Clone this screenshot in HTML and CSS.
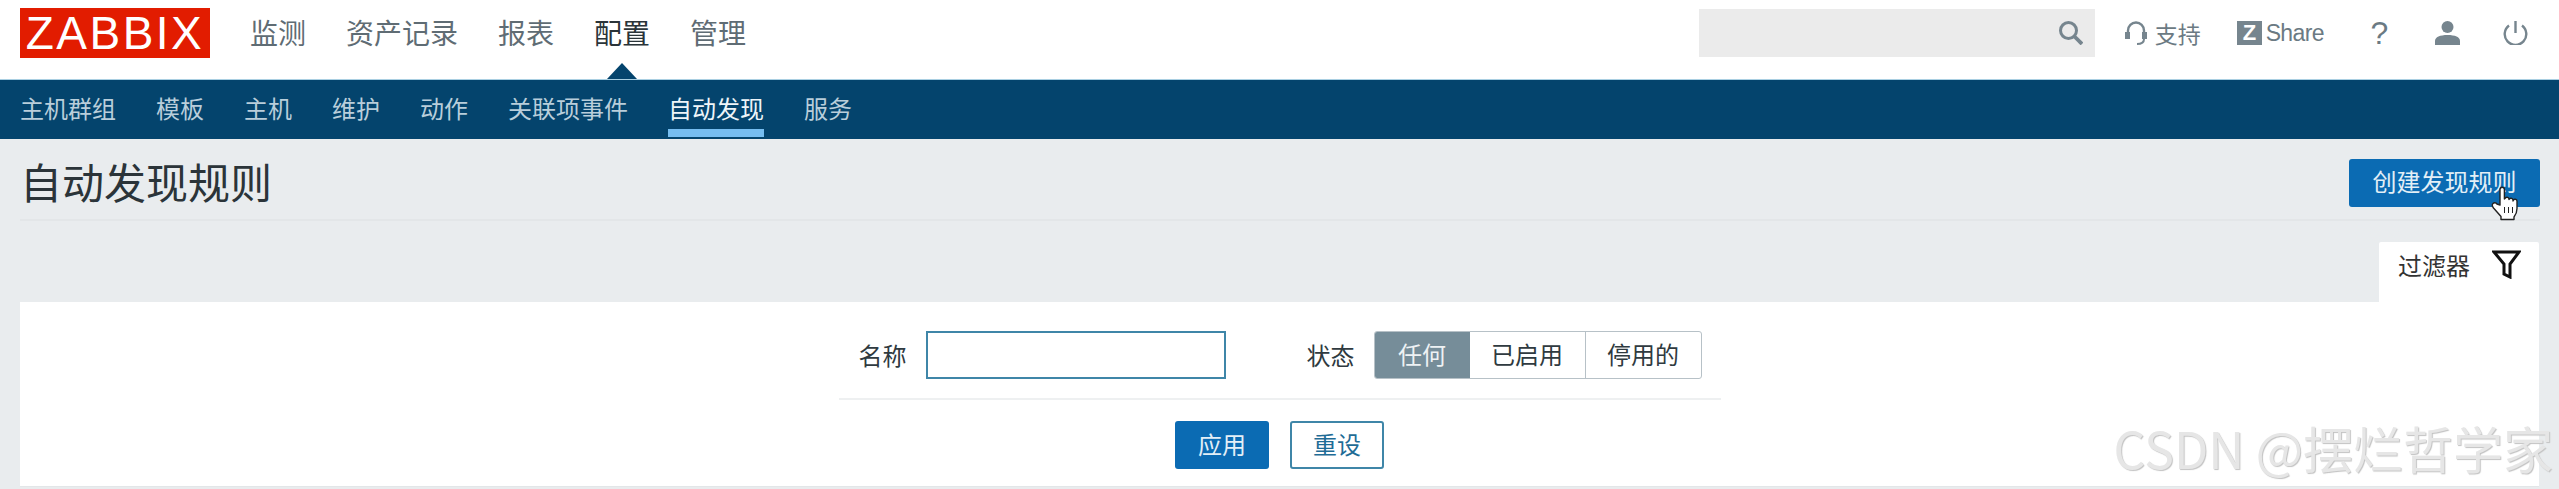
FILE: index.html
```html
<!DOCTYPE html>
<html lang="zh-CN">
<head>
  <meta charset="UTF-8" />
  <title>自动发现规则</title>
  <link rel="stylesheet" href="styles.css">
</head>
<body>

  <header class="top-bar">
    <a class="logo">ZABBIX</a>
    <nav class="main-nav">
      <a>监测</a>
      <a>资产记录</a>
      <a>报表</a>
      <a class="active">配置</a>
      <a>管理</a>
    </nav>
    <div class="top-tools">
      <div class="search">
        <svg class="search-icon" viewBox="0 0 24 24" width="24" height="24" fill="none" stroke="#76858e" stroke-width="3">
          <circle cx="9.5" cy="9.5" r="8"/>
          <path d="M15 15l8 8" stroke-width="3.8"/>
        </svg>
      </div>
      <a class="tool support">
        <svg viewBox="0 0 22 24" width="22" height="24" fill="none" stroke="#76858e" stroke-width="2.4">
          <path d="M3 15V9.500a8 8 0 0 1 16 0V15"/>
          <path d="M2.500 11v7M19.500 11v7" stroke-width="5"/>
          <path d="M19 18c0 3-2 5-7 5" stroke-width="2"/>
        </svg>
        <span>支持</span>
      </a>
      <a class="tool share"><i class="z-box">Z</i><span>Share</span></a>
      <a class="tool help">?</a>
      <a class="tool user">
        <svg viewBox="0 0 25 24" width="25" height="24" fill="#76858e">
          <circle cx="12.5" cy="6" r="6"/>
          <path d="M0 24v-4c0-4 5-6 12.500-6s12.500 2 12.500 6v4z"/>
        </svg>
      </a>
      <a class="tool power">
        <svg viewBox="0 0 25 24" width="25" height="24" fill="none" stroke="#76858e" stroke-width="2.4">
          <path d="M12.500 0v12"/>
          <path d="M6 4.500a10.800 10.800 0 1 0 13 0"/>
        </svg>
      </a>
    </div>
  </header>

  <nav class="sub-nav">
    <a>主机群组</a>
    <a>模板</a>
    <a>主机</a>
    <a>维护</a>
    <a>动作</a>
    <a>关联项事件</a>
    <a class="active">自动发现</a>
    <a>服务</a>
  </nav>

  <main>
    <div class="title-row">
      <h1>自动发现规则</h1>
      <button class="create-btn">创建发现规则
        <svg class="hand" viewBox="0 0 28 35" width="28" height="35" fill="#fff" stroke="#222" stroke-width="1.4" stroke-linejoin="round">
          <path d="M9 19V3.500a2.200 2.200 0 0 1 4.400 0V13l.6-.5a2.100 2.100 0 0 1 4 .5v.5a2.100 2.100 0 0 1 4 .5v1a2 2 0 0 1 4 .5v7c0 4-1 6-3 8.500v2.500H10v-3L2.500 22c-1.500-2-1.500-3.500-.5-4.500s3-1 4 .5z"/>
          <path d="M13.500 21v6M17.500 21v6M21.500 21v6" fill="none" stroke-width="1"/>
        </svg>
      </button>
    </div>

    <div class="filter-tab">
      <span>过滤器</span>
      <svg viewBox="0 0 29 29" width="29" height="29" fill="none" stroke="#111" stroke-width="3" stroke-linejoin="miter">
        <path d="M2 2h25L18 14v13l-6-3V14z"/>
      </svg>
    </div>

    <section class="filter-panel">
      <div class="filter-fields">
        <label class="field-label">名称</label>
        <input class="name-input" type="text" />
        <label class="field-label status-label">状态</label>
        <div class="segments">
          <span class="segment on">任何</span>
          <span class="segment wide">已启用</span>
          <span class="segment wide">停用的</span>
        </div>
      </div>
      <div class="filter-actions">
        <button class="btn-apply">应用</button>
        <button class="btn-reset">重设</button>
      </div>
    </section>
  </main>

  <div class="watermark">CSDN @摆烂哲学家</div>

</body>
</html>
```

FILE: styles.css
```css
:root {
  --font-family: "Noto Sans CJK SC", "Liberation Sans", sans-serif;
  --navy: #04446d;
  --blue: #0b6bb3;
  --icon: #76858e;
  --text: #2f3a40;
}

* {
  box-sizing: border-box;
}

html, body {
  height: 489px;
  overflow: hidden;
}

body {
  margin: 0;
  position: relative;
  font-family: var(--font-family);
  font-size: 24px;
  background: #e9ecee;
  color: var(--text);
}

.top-bar {
  height: 79px;
  background: #fff;
  display: flex;
  padding: 8px 31px 0 20px;
}

.logo {
  width: 190px;
  height: 50px;
  background: #e21c00;
  color: #fff;
  font-family: "Liberation Sans", sans-serif;
  font-size: 46px;
  letter-spacing: 2.5px;
  line-height: 50px;
  text-align: center;
}

.main-nav {
  display: flex;
  gap: 40px;
  margin-left: 40px;
  font-size: 28px;
  line-height: 48px;
  color: #5f6c74;
}

.main-nav a {
  position: relative;
  height: 71px;
}

.main-nav a.active {
  color: #2a3439;
}

.main-nav a.active::after {
  content: "";
  position: absolute;
  left: 13px;
  bottom: 0;
  border-left: 15px solid transparent;
  border-right: 15px solid transparent;
  border-bottom: 16px solid var(--navy);
}

.top-tools {
  margin-left: auto;
  display: flex;
  align-items: center;
  height: 50px;
  color: #6b7a83;
}

.search {
  width: 396px;
  height: 48px;
  background: #ebebeb;
  display: flex;
  align-items: center;
  justify-content: flex-end;
  padding-right: 12px;
}

.tool {
  display: flex;
  align-items: center;
  height: 30px;
}

.support {
  gap: 8px;
  margin-left: 30px;
  font-size: 23px;
}

.share {
  gap: 4px;
  margin-left: 36px;
  font-family: "Liberation Sans", sans-serif;
  font-size: 23px;
  letter-spacing: -0.6px;
}

.z-box {
  width: 25px;
  height: 24px;
  background: var(--icon);
  color: #fff;
  font-size: 22px;
  font-weight: 700;
  font-style: normal;
  line-height: 24px;
  text-align: center;
}

.help {
  width: 15px;
  margin-left: 48px;
  font-family: "Liberation Sans", sans-serif;
  font-size: 32px;
  justify-content: center;
}

.user {
  margin-left: 48px;
}

.power {
  margin-left: 43px;
}

.sub-nav {
  height: 60px;
  background: var(--navy);
  border-top: 1px solid #a9cfe2;
  display: flex;
  gap: 40px;
  padding: 0 20px;
  color: #b9cedb;
  line-height: 55px;
}

.sub-nav a {
  height: 57px;
}

.sub-nav a.active {
  color: #eef5f9;
  border-bottom: 8px solid #76bdf0;
}

.title-row {
  height: 82px;
  margin: 0 19px 0 20px;
  padding-top: 20px;
  border-bottom: 2px solid #e3e6e8;
  display: flex;
  justify-content: space-between;
  align-items: flex-start;
}

h1 {
  margin: 0;
  font-size: 42px;
  font-weight: 400;
  line-height: 44px;
  color: #2b3439;
}

.create-btn {
  position: relative;
  width: 191px;
  height: 48px;
  padding: 0 0 5px;
  background: var(--blue);
  border: none;
  border-radius: 3px;
  color: #e3eff7;
  font: inherit;
}

.hand {
  position: absolute;
  left: 142px;
  top: 27px;
}

.filter-tab {
  width: 160px;
  height: 60px;
  margin: 21px 20px 0 auto;
  padding: 0 18px 16px 19px;
  background: #fff;
  display: flex;
  align-items: center;
  justify-content: space-between;
  border-radius: 2px 2px 0 0;
  color: #333;
}

.filter-panel {
  height: 185px;
  margin: 0 20px;
  background: #fff;
  border-bottom: 1px solid #e3e6e8;
}

.filter-fields {
  width: 882px;
  height: 98px;
  margin: 0 auto;
  padding: 29px 0 0 20px;
  border-bottom: 2px solid #eef0f1;
  display: flex;
  align-items: flex-start;
}

.field-label {
  width: 48px;
  line-height: 48px;
  margin-right: 19px;
}

.status-label {
  margin-left: 81px;
}

.name-input {
  width: 300px;
  height: 48px;
  border: 2px solid #3f86a8;
  border-radius: 0;
  background: #fff;
}

.segments {
  display: flex;
  width: 328px;
  height: 48px;
  border: 1px solid #b7c1c7;
  border-radius: 3px;
  overflow: hidden;
}

.segment {
  width: 95px;
  line-height: 44px;
  text-align: center;
  border-right: 1px solid #b7c1c7;
}

.segment.wide {
  flex: 1;
}

.segment:last-child {
  border-right: none;
}

.segment.on {
  background: #768d99;
  border-right: none;
  color: #eef2f4;
}

.filter-actions {
  display: flex;
  justify-content: center;
  gap: 21px;
  padding-top: 21px;
}

.filter-actions button {
  width: 94px;
  height: 48px;
  padding: 0 0 3px;
  border-radius: 3px;
  font: inherit;
}

.btn-apply {
  background: var(--blue);
  border: none;
  color: #e3eff7;
}

.btn-reset {
  background: #fff;
  border: 2px solid #3f86a8;
  color: #1f6c96;
}

.watermark {
  position: absolute;
  right: 6px;
  top: 412px;
  font-size: 50px;
  line-height: 70px;
  white-space: nowrap;
  color: #e6e6e6;
  text-shadow: 1px 1px 1px #c2c2c2;
}
```
